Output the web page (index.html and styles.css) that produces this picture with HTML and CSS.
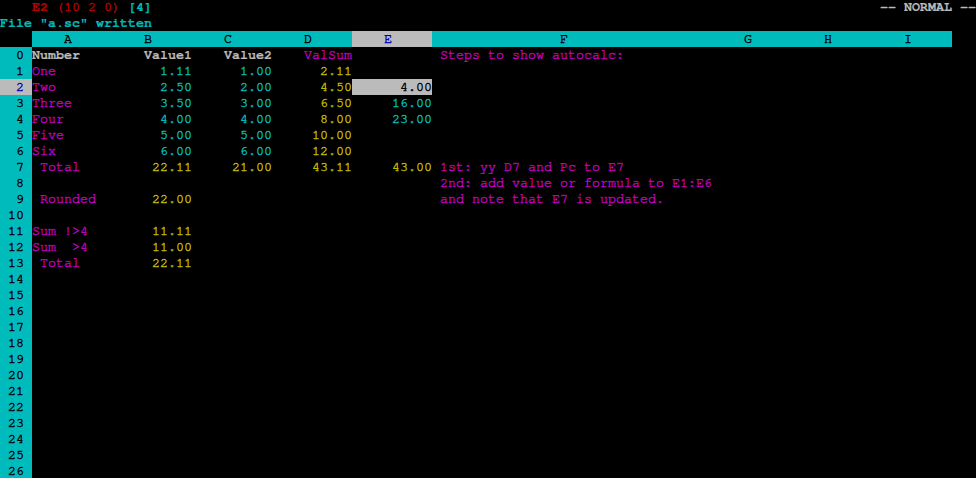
FILE: index.html
```html
<!DOCTYPE html>
<html>
<head>
<meta charset="utf-8">
<link rel="stylesheet" href="styles.css">
</head>
<body>
<div class="screen">
  <div class="status">
    <span class="pos"><b class="red">E2</b> <span class="red">(10 2 0)</span> <b class="cy">[4]</b></span>
    <b class="mode">-- NORMAL --</b>
  </div>
  <div class="msg">File "a.sc" written</div>

  <div class="row head">
    <span class="rn"></span>
    <span class="h">A</span><span class="h">B</span><span class="h">C</span><span class="h">D</span><span class="h sel">E</span><span class="h wide">F</span><span class="h">G</span><span class="h">H</span><span class="h">I</span>
  </div>

  <div class="row"><span class="rn">0</span><b class="cA l w">Number</b><b class="cB r w">Value1</b><b class="cC r w">Value2</b><span class="cD r m">ValSum</span><span class="cF l m"> Steps to show autocalc:</span></div>
  <div class="row"><span class="rn">1</span><span class="cA l m">One</span><span class="cB r c">1.11</span><span class="cC r c">1.00</span><span class="cD r y">2.11</span></div>
  <div class="row"><span class="rn cur">2</span><span class="cA l m">Two</span><span class="cB r c">2.50</span><span class="cC r c">2.00</span><span class="cD r y">4.50</span><span class="cE r hl">4.00</span></div>
  <div class="row"><span class="rn">3</span><span class="cA l m">Three</span><span class="cB r c">3.50</span><span class="cC r c">3.00</span><span class="cD r y">6.50</span><span class="cE r c">16.00</span></div>
  <div class="row"><span class="rn">4</span><span class="cA l m">Four</span><span class="cB r c">4.00</span><span class="cC r c">4.00</span><span class="cD r y">8.00</span><span class="cE r c">23.00</span></div>
  <div class="row"><span class="rn">5</span><span class="cA l m">Five</span><span class="cB r c">5.00</span><span class="cC r c">5.00</span><span class="cD r y">10.00</span></div>
  <div class="row"><span class="rn">6</span><span class="cA l m">Six</span><span class="cB r c">6.00</span><span class="cC r c">6.00</span><span class="cD r y">12.00</span></div>
  <div class="row"><span class="rn">7</span><span class="cA l m"> Total</span><span class="cB r y">22.11</span><span class="cC r y">21.00</span><span class="cD r y">43.11</span><span class="cE r y">43.00</span><span class="cF l m"> 1st: yy D7 and Pc to E7</span></div>
  <div class="row"><span class="rn">8</span><span class="cF l m"> 2nd: add value or formula to E1:E6</span></div>
  <div class="row"><span class="rn">9</span><span class="cA l m"> Rounded</span><span class="cB r y">22.00</span><span class="cF l m"> and note that E7 is updated.</span></div>
  <div class="row"><span class="rn">10</span></div>
  <div class="row"><span class="rn">11</span><span class="cA l m">Sum !&gt;4</span><span class="cB r y">11.11</span></div>
  <div class="row"><span class="rn">12</span><span class="cA l m">Sum  &gt;4</span><span class="cB r y">11.00</span></div>
  <div class="row"><span class="rn">13</span><span class="cA l m"> Total</span><span class="cB r y">22.11</span></div>
  <div class="row"><span class="rn">14</span></div>
  <div class="row"><span class="rn">15</span></div>
  <div class="row"><span class="rn">16</span></div>
  <div class="row"><span class="rn">17</span></div>
  <div class="row"><span class="rn">18</span></div>
  <div class="row"><span class="rn">19</span></div>
  <div class="row"><span class="rn">20</span></div>
  <div class="row"><span class="rn">21</span></div>
  <div class="row"><span class="rn">22</span></div>
  <div class="row"><span class="rn">23</span></div>
  <div class="row"><span class="rn">24</span></div>
  <div class="row"><span class="rn">25</span></div>
  <div class="row"><span class="rn">26</span></div>
</div>
</body>
</html>
```

FILE: styles.css
```css
html, body {
  margin: 0;
  padding: 0;
  background: #000;
  overflow: hidden;
}
.screen {
  margin-top: -1px;
  font-family: "Nimbus Mono PS", "Nimbus Mono L", "FreeMono", "Courier New", "Liberation Mono", monospace;
  font-size: 13.333px;
  line-height: 16px;
  color: #bbbbbb;
  -webkit-text-stroke: 0.45px currentColor;
}
b { font-weight: bold; -webkit-text-stroke: 0.2px currentColor; }
.status {
  display: flex;
  justify-content: space-between;
  height: 16px;
}
.pos { padding-left: 32px; }
.red { color: #bb0000; }
.cy { color: #00bbbb; }
.mode { color: #bbbbbb; white-space: pre; }
.msg {
  height: 16px;
  color: #00bbbb;
  font-weight: bold;
  white-space: pre;
  -webkit-text-stroke: 0.2px currentColor;
}
.row {
  display: grid;
  grid-template-columns: 32px repeat(5, 80px) 280px repeat(3, 80px);
  height: 16px;
}
.row > * {
  white-space: pre;
  height: 16px;
  overflow: hidden;
}
.rn {
  grid-column: 1;
  background: #00bbbb;
  color: #000;
  text-align: right;
  padding-right: 8px;
}
.rn.cur {
  background: #bbbbbb;
  color: #0000bb;
}
.head .rn { background: #000; }
.h {
  background: #00bbbb;
  color: #000;
  padding-left: 32px;
}
.h.sel {
  background: #bbbbbb;
  color: #0000bb;
}
.h.wide { padding-left: 128px; }
.cA { grid-column: 2; }
.cB { grid-column: 3; }
.cC { grid-column: 4; }
.cD { grid-column: 5; }
.cE { grid-column: 6; }
.cF { grid-column: 7; }
.l { text-align: left; }
.r { text-align: right; }
.w { color: #bbbbbb; }
.m { color: #bb00bb; }
.y { color: #bbbb00; }
.c { color: #00bbbb; }
.hl { background: #bbbbbb; color: #000; }
```
